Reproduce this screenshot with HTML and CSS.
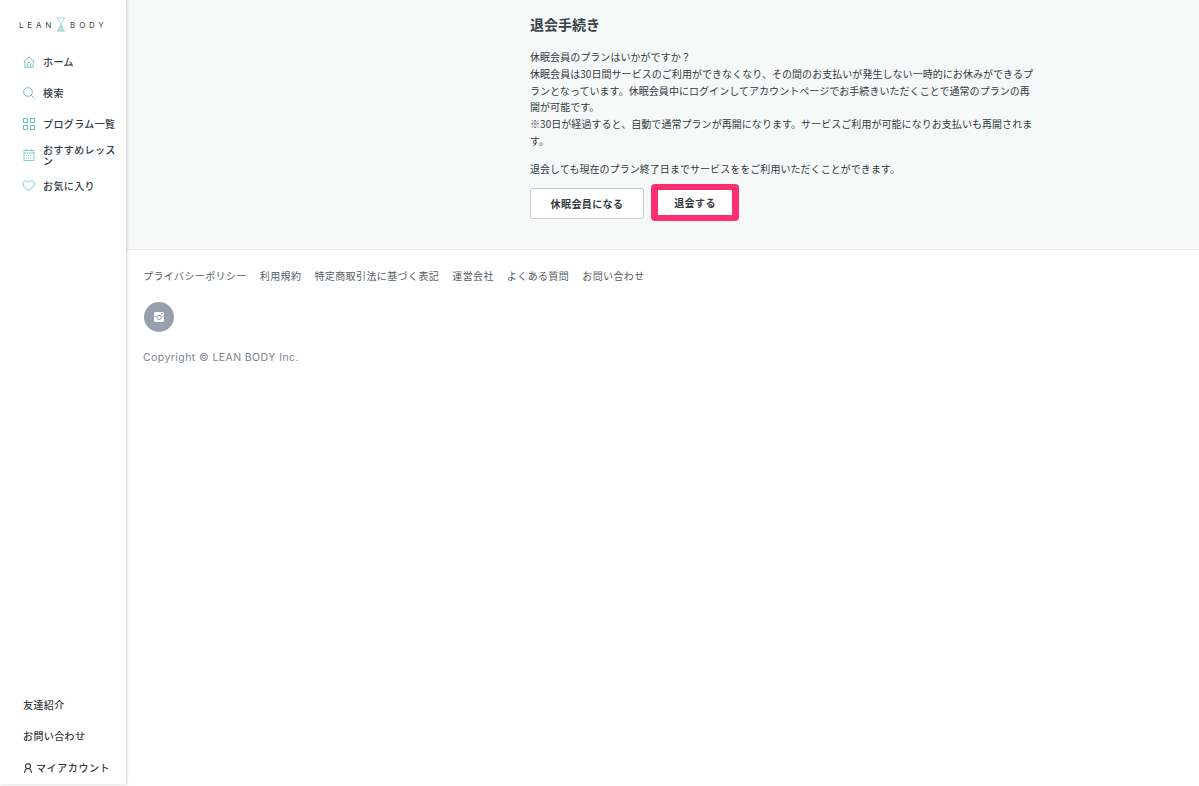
FILE: index.html
```html
<!DOCTYPE html>
<html lang="ja">
<head>
  <meta charset="utf-8">
  <title>退会手続き</title>
  <link rel="stylesheet" href="styles.css">
</head>
<body>
  <aside class="sidebar">
    <div class="logo">
      <span class="logo-word">LEAN</span>
      <svg class="logo-mark" width="8" height="15" viewBox="0 0 9 16" fill="none" stroke="#86d0cc" stroke-width="0.8">
        <path d="M0.5 0.5H8.5L4.5 8Z"/>
        <path d="M4.5 8L8.5 15.5H0.5Z" fill="#b5e2df"/>
      </svg>
      <span class="logo-word">BODY</span>
    </div>

    <nav class="nav">
      <a class="nav-item">
        <svg class="nav-icon" viewBox="0 0 12 12" fill="none" stroke="#6cc4c2" stroke-width="0.9">
          <path d="M0.5 5.8L6 0.8L11.5 5.8"/>
          <path d="M1.8 4.8V11.2H10.2V4.8"/>
          <path d="M4.4 11.2V7.6C4.4 5.9 7.6 5.9 7.6 7.6V11.2"/>
        </svg>
        <span>ホーム</span>
      </a>
      <a class="nav-item">
        <svg class="nav-icon" viewBox="0 0 12 12" fill="none" stroke="#6cc4c2" stroke-width="1">
          <circle cx="5" cy="5" r="4.3"/>
          <path d="M8.1 8.1L11.6 11.6"/>
        </svg>
        <span>検索</span>
      </a>
      <a class="nav-item">
        <svg class="nav-icon" viewBox="0 0 12 12" fill="none" stroke="#6cc4c2" stroke-width="1">
          <rect x="0.5" y="0.5" width="4" height="4"/>
          <rect x="7.5" y="0.5" width="4" height="4"/>
          <rect x="0.5" y="7.5" width="4" height="4"/>
          <rect x="7.5" y="7.5" width="4" height="4"/>
        </svg>
        <span>プログラム一覧</span>
      </a>
      <a class="nav-item">
        <svg class="nav-icon" viewBox="0 0 12 12" fill="none" stroke="#6cc4c2" stroke-width="0.8">
          <rect x="1" y="1.5" width="10" height="10"/>
          <path d="M1 4H11M3.5 0V2M8.5 0V2"/>
          <path d="M3 6.5H9M3 9H9" stroke-dasharray="1 1"/>
        </svg>
        <span>おすすめレッスン</span>
      </a>
      <a class="nav-item">
        <svg class="nav-icon heart" viewBox="0 0 14 14" fill="none" stroke="#6cc4c2" stroke-width="1">
          <path d="M7 12.3C3.5 9.8 1 7.8 1 5C1 3.2 2.3 2 3.9 2C5.2 2 6.3 2.7 7 3.9C7.7 2.7 8.8 2 10.1 2C11.7 2 13 3.2 13 5C13 7.8 10.5 9.8 7 12.3Z"/>
        </svg>
        <span>お気に入り</span>
      </a>
    </nav>

    <div class="sub-nav">
      <a class="sub-item">友達紹介</a>
      <a class="sub-item">お問い合わせ</a>
      <a class="sub-item account">
        <svg class="account-icon" viewBox="0 0 10 10" fill="none" stroke="#333b42" stroke-width="1.2">
          <circle cx="5" cy="3.2" r="2.5"/>
          <path d="M1.5 9.8C1.8 7.8 2.6 6.2 3.6 5.6M8.5 9.8C8.2 7.8 7.4 6.2 6.4 5.6"/>
        </svg>
        <span>マイアカウント</span>
      </a>
    </div>
  </aside>

  <div class="main">
    <section class="cancel">
      <div class="cancel-inner">
        <h1 class="cancel-title">退会手続き</h1>
        <p class="cancel-text">休眠会員のプランはいかがですか？<br>休眠会員は30日間サービスのご利用ができなくなり、その間のお支払いが発生しない一時的にお休みができるプランとなっています。休眠会員中にログインしてアカウントページでお手続きいただくことで通常のプランの再開が可能です。<br>※30日が経過すると、自動で通常プランが再開になります。サービスご利用が可能になりお支払いも再開されます。</p>
        <p class="cancel-text cancel-note">退会しても現在のプラン終了日までサービスををご利用いただくことができます。</p>
        <div class="button-row">
          <button class="btn btn-outline">休眠会員になる</button>
          <span class="highlight"><button class="btn btn-plain">退会する</button></span>
        </div>
      </div>
    </section>

    <footer class="footer">
      <ul class="footer-links">
        <li>プライバシーポリシー</li>
        <li>利用規約</li>
        <li>特定商取引法に基づく表記</li>
        <li>運営会社</li>
        <li>よくある質問</li>
        <li>お問い合わせ</li>
      </ul>
      <div class="social">
        <svg width="10" height="10" viewBox="0 0 10 10">
          <rect width="10" height="10" rx="1.5" fill="#fff"/>
          <circle cx="5" cy="5.3" r="2.2" fill="none" stroke="#96a0ad" stroke-width="1"/>
          <rect x="7" y="1.2" width="1.6" height="1.4" fill="#96a0ad"/>
          <path d="M0 4.6H2.5M7.5 4.6H10" stroke="#96a0ad" stroke-width="0.6"/>
        </svg>
      </div>
      <p class="copyright">Copyright © LEAN BODY Inc.</p>
    </footer>
  </div>
</body>
</html>
```

FILE: styles.css
```css
* {
  box-sizing: border-box;
}

html, body {
  height: 100%;
}

body {
  display: flex;
  margin: 0;
  background-color: #fff;
  color: #333b42;
  font-family: "Noto Sans CJK JP", "Noto Sans", sans-serif;
  font-size: 10px;
  overflow: hidden;
}

a {
  color: inherit;
  text-decoration: none;
}

/* Sidebar */
.sidebar {
  display: flex;
  flex-direction: column;
  flex: none;
  width: 126px;
  height: 784px;
  padding-top: 16px;
  background-color: #fff;
  box-shadow: 1px 0 3px rgba(0, 0, 0, 0.18);
  position: relative;
}

.logo {
  display: flex;
  align-items: center;
  height: 17px;
  padding-left: 19px;
  color: #3d454b;
  font-family: "Inter", sans-serif;
  font-size: 8px;
  letter-spacing: 3.8px;
}

.logo-mark {
  flex: none;
  margin: 0 5px 0 2px;
}

.nav {
  display: flex;
  flex-direction: column;
  margin-top: 13px;
  padding-left: 23px;
  padding-right: 9px;
}

.nav-item {
  display: flex;
  align-items: center;
  height: 31px;
  font-weight: 500;
  font-size: 10px;
  letter-spacing: 0.4px;
  line-height: 11px;
}

.nav-icon {
  flex: none;
  width: 12px;
  height: 12px;
  margin-right: 8px;
}

.nav-icon.heart {
  width: 13px;
  height: 13px;
  margin-left: -1px;
  margin-right: 8px;
}

.sub-nav {
  display: flex;
  flex-direction: column;
  margin-top: auto;
  padding-left: 23px;
  padding-bottom: 1px;
}

.sub-item {
  display: flex;
  align-items: center;
  height: 31px;
  font-weight: 500;
  letter-spacing: 0.4px;
}

.account {
  gap: 3px;
  margin-top: 1px;
  letter-spacing: 0.6px;
}

.account-icon {
  width: 10px;
  height: 10px;
}

/* Main */
.main {
  flex: 1;
  min-width: 0;
}

.cancel {
  height: 250px;
  padding-top: 14px;
  padding-left: 404px;
  background-color: #f7f8f8;
  border-bottom: 1px solid #ebeced;
}

.cancel-inner {
  width: 505px;
}

.cancel-title {
  margin: 0 0 15px;
  color: #3a4249;
  font-size: 14px;
  font-weight: 700;
  line-height: 20px;
}

.cancel-text {
  margin: 0 0 11px;
  font-size: 10px;
  line-height: 16.8px;
  letter-spacing: 0.05px;
}

.cancel-note {
  margin-bottom: 6px;
}

.button-row {
  display: flex;
  align-items: flex-start;
  gap: 7px;
}

.btn {
  width: 114px;
  height: 31px;
  padding: 0;
  background-color: #fff;
  border: 1px solid #c9cdd0;
  border-radius: 2px;
  color: #333b42;
  font-family: inherit;
  font-size: 10px;
  font-weight: 700;
  letter-spacing: 0.4px;
}

.btn-outline {
  margin-top: 4px;
}

.highlight {
  display: block;
  padding: 6px 7px;
  background-color: #ff2e6e;
  border-radius: 4px;
}

.btn-plain {
  display: block;
  width: 74px;
  height: 25px;
  border: none;
  border-radius: 0;
}

/* Footer */
.footer {
  padding: 16px 17px 0;
}

.footer-links {
  display: flex;
  gap: 13px;
  margin: 0;
  padding: 0;
  color: #555c63;
  font-size: 10px;
  line-height: 20px;
  letter-spacing: 0.4px;
  list-style: none;
}

.social {
  display: flex;
  align-items: center;
  justify-content: center;
  width: 30px;
  height: 30px;
  margin-top: 16px;
  margin-left: 1px;
  background-color: #96a0ad;
  border-radius: 50%;
}

.copyright {
  margin: 18px 0 0;
  color: #7c858e;
  font-family: "Inter", sans-serif;
  font-size: 10.5px;
  line-height: 16px;
  letter-spacing: 0.42px;
}
```
